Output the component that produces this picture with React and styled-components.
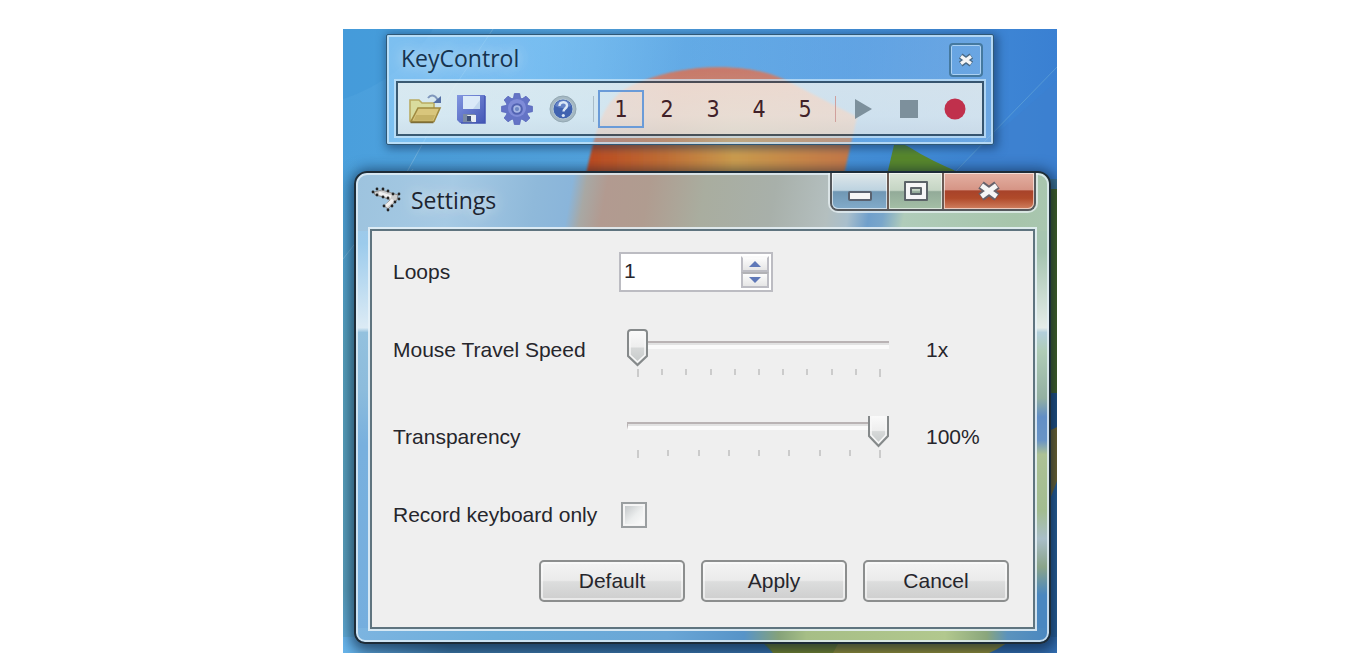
import React, { useState } from "react";
import styled, { createGlobalStyle } from "styled-components";

const GlobalStyle = createGlobalStyle`
  *, *::before, *::after { box-sizing: border-box; }
  body { margin: 0; background: #fff; }
  button, input { font: inherit; color: inherit; margin: 0; }
`;

const captionFont = `"Open Sans", "Noto Sans", sans-serif`;
const dialogFont = `"Liberation Sans", Arial, sans-serif`;

const Page = styled.main`
  display: flex;
  justify-content: center;
  padding: 29px 0 19px 39px;
`;

const Desktop = styled.div`
  position: relative;
  width: 100%;
  max-width: 714px;
  min-height: 624px;
  overflow: hidden;
  background: #4a9bd6;
`;

const WallpaperSvg = styled.svg`
  position: absolute;
  inset: 0;
  width: 100%;
  height: 100%;
`;

/* ---------- toolbar window ---------- */

const ToolWindow = styled.section`
  position: absolute;
  top: 5px;
  left: 43px;
  right: 63px;
  padding: 0 9px 8px;
  border: 1px solid #2f5876;
  border-radius: 2px;
  background: linear-gradient(100deg, rgba(160, 215, 255, 0.6), rgba(150, 210, 255, 0.55) 25%, rgba(145, 198, 246, 0.3) 48%, rgba(150, 198, 245, 0.34) 75%, rgba(155, 200, 240, 0.5));
  box-shadow: inset 0 0 0 2px rgba(205, 232, 250, 0.75), 2px 2px 10px 2px rgba(20, 50, 90, 0.55);
  font-family: ${captionFont};
`;

const ToolCaption = styled.header`
  display: flex;
  align-items: flex-start;
  justify-content: space-between;
  height: 44px;
  padding: 8px 1px 0 5px;
`;

const CaptionText = styled.h1`
  margin: 0;
  font-size: 23px;
  font-weight: 400;
  line-height: 30px;
  color: ${(p) => p.$tone || "#16334f"};
  text-shadow: 0 0 12px rgba(255, 255, 255, 0.5), 0 0 20px rgba(255, 255, 255, 0.5);
`;

const SmallClose = styled.button`
  display: grid;
  place-items: center;
  width: 34px;
  height: 34px;
  padding: 0;
  border: 2px solid #45799f;
  border-radius: 4px;
  background: transparent;
  box-shadow: inset 0 0 0 1px rgba(200, 228, 250, 0.7);
`;

const ToolStrip = styled.div`
  display: flex;
  align-items: center;
  height: 55px;
  padding-left: 4px;
  margin-top: 2px;
  border: 2px solid rgba(40, 62, 78, 0.78);
  background: linear-gradient(rgba(248, 247, 240, 0.74), rgba(244, 246, 242, 0.74) 65%, rgba(234, 236, 234, 0.74)) padding-box;
  box-shadow: 0 0 0 2px rgba(205, 232, 250, 0.7);
`;

const ToolButton = styled.button`
  display: grid;
  place-items: center;
  flex: 0 0 46px;
  height: 38px;
  padding: 0;
  border: 2px solid ${(p) => (p.$active ? "#6a9bd8" : "transparent")};
  background: none;
  font-family: "DejaVu Sans Condensed", "DejaVu Sans", sans-serif;
  font-size: 23px;
  line-height: 30px;
  color: #402028;
`;

const Divider = styled.span`
  flex: 0 0 12px;
  height: 26px;
  background: linear-gradient(${(p) => p.$line}, ${(p) => p.$line}) 7px 0 / 1px 100% no-repeat;
`;

/* ---------- settings window ---------- */

const SettingsWindow = styled.section`
  position: absolute;
  top: 142px;
  left: 11px;
  right: 6px;
  padding: 0 14px 13px;
  border: 2px solid #1d2c38;
  border-radius: 13px 13px 11px 11px;
  background:
    linear-gradient(100deg, #9dc3de, #a6cae4 14%, #8fb9da 26%, #8ab5da 31%, #a8a8a4 33%, #b29a90 36%, #b09c90 42%, #a9ad9f 50%, #a8b0aa 60%, #b4bfbf 68%, #a9bfcc 71%, #6f9fcb 74%, #79a6ca 76%, #b0ccba 79%, #a7c5ab 95%, #a9c6b0) 0 0 / 100% 58px no-repeat,
    linear-gradient(90deg, #7cb4e0, #6caedb 20%, #6aa6d6 45%, #5794c8 56%, #85a27a 61%, #a6be86 65%, #b2c88e 85%, #8aa67c 91%, #5b93bd 94%, #4a87c0) 0 100% / 100% 14px no-repeat,
    linear-gradient(#9fc5e0, #9ccbec 15%, #dcebf5 33%, #93c1de 34%, #8dbcdc 46%, #78b0de 58%, #75aede) 0 0 / 50% 100% no-repeat,
    linear-gradient(#a9c6b0, #a5c4b0 17%, #e4ece8 33%, #b2cfdb 34%, #afccb6 38%, #93b0a2 48%, #628fc6 52%, #6994c6 57%, #acc195 60%, #a2bc90 72%, #a9bec8 78%, #8aa48a 84%, #4a87c0 90%, #4a87c0) 100% 0 / 50% 100% no-repeat;
  box-shadow: inset 0 0 0 2px rgba(228, 240, 248, 0.8), 1px 3px 14px 4px rgba(8, 28, 54, 0.65);
  font-family: ${dialogFont};
`;

const TitleBar = styled.header`
  display: flex;
  align-items: flex-start;
  height: 56px;
`;

const TitleLabel = styled.div`
  display: flex;
  flex: 1;
  align-items: center;
  gap: 10px;
  padding: 12px 0 0 1px;
  font-family: ${captionFont};
`;

const WindowControls = styled.div`
  display: flex;
  height: 38px;
  margin-right: -1px;
  border: 2px solid #55585c;
  border-top: 0;
  border-radius: 0 0 8px 8px;
  box-shadow: 0 0 0 2px rgba(235, 243, 246, 0.7);
  clip-path: inset(0 -2px -2px);
`;

const controlFill = {
  min: "linear-gradient(#dfe7ea, #bdd3e0 48%, #7097b4 52%, #82abca)",
  max: "linear-gradient(#dce6d8, #c5d5c4 48%, #93ab99 52%, #a4bfa6)",
  close: "linear-gradient(#e3b0a2, #d69586 46%, #a8432a 50%, #b04a2a 70%, #d08060)",
};

const controlRadius = { min: "0 0 0 6px", max: "0", close: "0 0 6px 0" };

const ControlButton = styled.button`
  display: grid;
  place-items: center;
  width: ${(p) => (p.$kind === "close" ? 92 : 55)}px;
  padding: 0;
  border: 0;
  border-left: ${(p) => (p.$kind === "min" ? "0" : "2px solid #6b5b54")};
  border-radius: ${(p) => controlRadius[p.$kind]};
  background: ${(p) => controlFill[p.$kind]};
  box-shadow: inset 0 0 0 1px rgba(255, 255, 255, 0.6);
`;

const Client = styled.form`
  padding: 2px 0 25px 21px;
  border: 2px solid #5f747f;
  background: #efefef;
  box-shadow: 0 0 0 2px rgba(232, 242, 248, 0.85);
  font-size: 21px;
  line-height: 30px;
  color: #26262c;
`;

const Row = styled.div`
  display: grid;
  grid-template-columns: 226px minmax(0, 1fr) 107px;
  align-items: center;
  height: ${(p) => p.$height}px;
`;

const Label = styled.label`
  white-space: nowrap;
`;

const Spinner = styled.div`
  display: flex;
  width: 154px;
  height: 40px;
  padding: 2px;
  border: 2px solid #bcbcc2;
  background: #fff;
`;

const SpinInput = styled.input`
  flex: 1;
  min-width: 0;
  height: 30px;
  padding: 0 0 0 1px;
  border: 0;
  outline: 0;
  background: transparent;
`;

const SpinButtons = styled.div`
  display: grid;
  grid-template-rows: 1fr 1fr;
  width: 28px;
`;

const SpinButton = styled.button`
  display: grid;
  place-items: center;
  padding: 0;
  border: 2px solid #bdbdc4;
  border-top-color: ${(p) => (p.$up ? "#fafafa" : "#b2b2b6")};
  background: linear-gradient(#fcfcfc, #e6e6e6);
`;

const SliderBox = styled.div`
  position: relative;
  height: ${(p) => (p.$clipped ? 42 : 48)}px;
  margin: ${(p) => (p.$clipped ? "0 37px 0 8px" : "6px 37px 0 8px")};
  padding-top: ${(p) => (p.$clipped ? 6 : 12)}px;
`;

const Track = styled.div`
  height: 8px;
  border: solid #b9b3b4;
  border-width: 2px 0 0 ${(p) => (p.$clipped ? 1 : 0)}px;
  border-bottom: 4px solid #fafafa;
  background: #e2e2e2;
`;

const Ticks = styled.div`
  display: flex;
  justify-content: space-between;
  height: 8px;
  margin-top: 20px;
  padding: 0 8px 0 10px;
`;

const Tick = styled.i`
  width: 2px;
  height: 6px;
  background: #cbcbcb;
  &:first-child, &:last-child { height: 8px; }
`;

const Thumb = styled.svg`
  position: absolute;
  top: 0;
  pointer-events: none;
`;

const Range = styled.input`
  position: absolute;
  top: 0;
  left: 0;
  width: 100%;
  height: 38px;
  appearance: none;
  background: transparent;
  outline: 0;
  &::-webkit-slider-thumb { appearance: none; width: 22px; height: 38px; background: transparent; }
`;

const Check = styled.input`
  appearance: none;
  display: block;
  width: 26px;
  height: 26px;
  margin-left: 2px;
  border: 2px solid #9a9ea0;
  background: linear-gradient(135deg, #c4c8ca, #eceeee 55%, #fafafa) content-box, #f6f6f6;
  padding: 2px;
  box-shadow: inset 0 0 0 1px #f4f4f4;
  &:checked { background: #5a78b8 content-box; }
`;

const Actions = styled.div`
  display: flex;
  justify-content: flex-end;
  gap: 16px;
  padding: 15px 24px 0 0;
`;

const PushButton = styled.button`
  width: 146px;
  height: 42px;
  padding: 0;
  border: 2px solid #8c8e8e;
  border-radius: 5px;
  background: linear-gradient(#f3f3f3, #ebebeb 48%, #dcdddd 52%, #cecece);
  box-shadow: inset 0 0 0 2px rgba(252, 252, 252, 0.6);
`;

/* ---------- drawings ---------- */

function Wallpaper() {
  return (
    <WallpaperSvg viewBox="0 0 714 624" preserveAspectRatio="none" aria-hidden="true">
      <defs>
        <linearGradient id="sky" x1="0" y1="0" x2="1" y2="0">
          <stop offset="0" stopColor="#4a9fdc" />
          <stop offset="0.35" stopColor="#54a5e0" />
          <stop offset="0.75" stopColor="#4490da" />
          <stop offset="1" stopColor="#3a80d2" />
        </linearGradient>
        <linearGradient id="deep" x1="0" y1="0" x2="0" y2="1">
          <stop offset="0.2" stopColor="#5aa9c8" stopOpacity="0" />
          <stop offset="0.5" stopColor="#5aa4bd" stopOpacity="0.9" />
          <stop offset="0.9" stopColor="#5a9fbc" />
          <stop offset="1" stopColor="#63b0e0" />
        </linearGradient>
        <linearGradient id="red" x1="0" y1="0" x2="1" y2="0">
          <stop offset="0" stopColor="#c04a20" />
          <stop offset="0.3" stopColor="#c67236" />
          <stop offset="0.55" stopColor="#d0a050" />
          <stop offset="0.85" stopColor="#cc8448" />
          <stop offset="1" stopColor="#c87848" />
        </linearGradient>
        <linearGradient id="redTop" x1="0" y1="0" x2="0" y2="1">
          <stop offset="0" stopColor="#e0562c" />
          <stop offset="0.6" stopColor="#e46c3c" stopOpacity="0.7" />
          <stop offset="1" stopColor="#d08040" stopOpacity="0" />
        </linearGradient>
        <linearGradient id="base" x1="0" y1="0" x2="1" y2="0">
          <stop offset="0" stopColor="#69b6ec" />
          <stop offset="0.15" stopColor="#427fae" />
          <stop offset="1" stopColor="#3470b4" />
        </linearGradient>
        <filter id="soften" x="-5%" y="-5%" width="110%" height="110%">
          <feGaussianBlur stdDeviation="1" />
        </filter>
      </defs>
      <rect width="714" height="624" fill="url(#sky)" />
      <rect width="14" height="624" fill="url(#deep)" />
      <path d="M0 0H90Q60 50 0 70Z" fill="#3f97d8" opacity="0.5" />
      <path d="M60 150L110 60L150 0M0 230L70 140" stroke="#a8d4ec" strokeWidth="1" opacity="0.4" fill="none" />
      <g filter="url(#soften)">
        <path d="M242 150C255 90 262 64 300 52C345 34 405 34 440 50L514 88L500 150Z" fill="url(#red)" />
        <path d="M250 118C258 80 268 64 300 52C345 34 405 34 440 50L514 88L506 120Z" fill="url(#redTop)" />
      </g>
      <path d="M543 150L551 116Q556 112 566 118Q588 132 620 145L714 175V380L690 420V150Z" fill="#5a8a2c" />
      <path d="M700 150H714V365H700Z" fill="#4c6b20" />
      <path d="M606 146L714 52V160H640Z" fill="#3d80ce" opacity="0.7" />
      <path d="M612 143L714 38" stroke="#7dbcd8" strokeWidth="1" opacity="0.4" />
      <path d="M704 364H714V400L704 405Z" fill="#24588e" />
      <path d="M700 405L714 398V455L704 480Z" fill="#80702c" />
      <path d="M704 478L714 452V624H704Z" fill="#2d69a6" />
      <rect y="608" width="714" height="16" fill="url(#base)" />
      <path d="M412 606H674Q660 618 646 624H430Q425 614 412 606Z" fill="#9a9434" />
      <path d="M412 606H500L490 624H430Z" fill="#6c8428" opacity="0.7" />
    </WallpaperSvg>
  );
}

function OpenIcon() {
  return (
    <svg width="34" height="32" viewBox="0 0 34 32" aria-hidden="true">
      <path d="M2 7h9l3 3h12v7H12L3 28H2Z" fill="#d9dc9e" stroke="#b9ab62" strokeWidth="1.600" />
      <path d="M3 28.500L10 15h22l-6 13.500Z" fill="#d9c67c" stroke="#a08a40" strokeWidth="1.600" />
      <path d="M6 27h19l2-5H8Z" fill="#c6b266" />
      <path d="M2.500 29.500h23" stroke="#7d6d38" strokeWidth="1.500" />
      <path d="M20 5c3-4 8-3 10 3" fill="none" stroke="#7f97bc" strokeWidth="2" />
      <path d="M33 3v7h-8Z" fill="#5671a6" />
    </svg>
  );
}

function SaveIcon() {
  return (
    <svg width="30" height="30" viewBox="0 0 30 30" aria-hidden="true">
      <defs>
        <linearGradient id="disk" x1="0" y1="0" x2="1" y2="1">
          <stop offset="0" stopColor="#8296e0" />
          <stop offset="1" stopColor="#4457b6" />
        </linearGradient>
      </defs>
      <path d="M1 1h28v28H4l-3-3Z" fill="url(#disk)" />
      <path d="M7 2h17v13H7Z" fill="#dbeaf8" />
      <path d="M17 15l7-9v9Z" fill="#c3d8ee" />
      <path d="M7 20h12v9H7Z" fill="#7a8aa4" />
      <path d="M11 21h9v7h-4Z" fill="#e8edf4" />
      <path d="M11 22h4v5h-4Z" fill="#3d4e78" />
      <path d="M29 2v27H5" fill="none" stroke="#4355b4" strokeWidth="1.500" />
    </svg>
  );
}

function GearIcon() {
  const teeth = [0, 45, 90, 135, 180, 225, 270, 315];
  return (
    <svg width="34" height="34" viewBox="0 0 32 32" aria-hidden="true">
      <g fill="#6474c6">
        {teeth.map((a) => (
          <path key={a} d="M12.500 7L13.500 1.500h5L19.500 7Z" stroke="#5868bc" strokeWidth="0.800" transform={`rotate(${a} 16 16)`} />
        ))}
        <circle cx="16" cy="16" r="11" />
      </g>
      <circle cx="16" cy="15" r="8.500" fill="#7f8cd8" />
      <circle cx="16" cy="16" r="4.500" fill="#a9b9e6" stroke="#5263b2" strokeWidth="2" />
      <circle cx="16" cy="16" r="2" fill="#6d88c4" />
    </svg>
  );
}

function HelpIcon() {
  return (
    <svg width="30" height="30" viewBox="0 0 30 30" aria-hidden="true">
      <circle cx="15" cy="15" r="13" fill="#a5b8c2" stroke="#93a8b3" strokeWidth="1" />
      <circle cx="15" cy="15" r="10" fill="#4063b0" stroke="#b3c7d6" strokeWidth="1" />
      <path d="M7 12a8.500 8.500 0 0 1 16 0Q15 16 7 12Z" fill="#6583c6" />
      <path d="M11.500 12c0-5 7.500-5 7.500-.5c0 3-3.500 3-3.500 6" fill="none" stroke="#dbe7f6" strokeWidth="2.400" />
      <circle cx="15.300" cy="21.500" r="1.600" fill="#dbe7f6" />
    </svg>
  );
}

function KeyboardIcon() {
  return (
    <svg width="30" height="26" viewBox="0 0 30 26" aria-hidden="true">
      <path d="M3 5L11 3L27 8L26 13L17 22L13 19L19 13L12 10L4 8Z" fill="#cdcdcd" stroke="#8e8e8e" strokeWidth="1" />
      <path d="M8 6l12 4M15 19l7-6" stroke="#f0f0f0" strokeWidth="3" />
      <g fill="#242424">
        {[[2, 5], [6, 2], [12, 2], [17, 4], [22, 7], [28, 7], [6, 8], [12, 10], [17, 11], [28, 12], [24, 15], [21, 19], [17, 23], [13, 19]].map(([x, y]) => (
          <circle key={`${x}-${y}`} cx={x} cy={y} r="1.400" />
        ))}
      </g>
    </svg>
  );
}

function CrossIcon({ width, height, outline }) {
  return (
    <svg width={width} height={height} viewBox="0 0 24 20" aria-hidden="true">
      <path d="M4 4L20 16M20 4L4 16" stroke={outline} strokeWidth="9" />
      <path d="M4.500 4.500L19.500 15.500M19.500 4.500L4.500 15.500" stroke="#f5f5f5" strokeWidth="5" />
    </svg>
  );
}

function SliderThumb({ clipped, ratio }) {
  const body = clipped ? "M1 0V20L10.500 30L20 20V0" : "M1 4Q1 1 4 1H17Q20 1 20 4V27L10.500 36L1 27Z";
  const id = clipped ? "thumbClipped" : "thumbFull";
  return (
    <Thumb width="21" height="38" viewBox="0 0 21 38" style={{ left: `calc((100% - 21px) * ${ratio})` }} aria-hidden="true">
      <defs>
        <linearGradient id={id} x1="0" y1="0" x2="0" y2="1">
          <stop offset="0" stopColor="#fafafa" />
          <stop offset="0.480" stopColor="#eeeeee" />
          <stop offset="0.520" stopColor="#d6d8d8" />
          <stop offset="1" stopColor="#c4c8c8" />
        </linearGradient>
      </defs>
      <path d={body} fill={`url(#${id})`} stroke="#85898a" strokeWidth="2" />
      <path d={clipped ? "M3 0V19L10.500 27L18 19V0" : "M3 4V26L10.500 33L18 26V4Z"} fill="none" stroke="#f8f8f8" strokeWidth="1.500" />
    </Thumb>
  );
}

function Slider({ id, min, max, value, onChange, ticks, clipped }) {
  return (
    <SliderBox $clipped={clipped}>
      <Track $clipped={clipped} />
      <Ticks>
        {Array.from({ length: ticks }, (_, i) => (
          <Tick key={i} />
        ))}
      </Ticks>
      <SliderThumb clipped={clipped} ratio={(value - min) / (max - min)} />
      <Range id={id} type="range" min={min} max={max} value={value} onChange={(e) => onChange(Number(e.target.value))} />
    </SliderBox>
  );
}

export default function App() {
  const [slot, setSlot] = useState(1);
  const [loops, setLoops] = useState(1);
  const [speed, setSpeed] = useState(1);
  const [opacity, setOpacity] = useState(100);

  return (
    <Page>
      <GlobalStyle />
      <Desktop>
        <Wallpaper />

        <ToolWindow>
          <ToolCaption>
            <CaptionText>KeyControl</CaptionText>
            <SmallClose type="button" aria-label="Close">
              <CrossIcon width={16} height={14} outline="#4a6a86" />
            </SmallClose>
          </ToolCaption>
          <ToolStrip>
            <ToolButton aria-label="Open"><OpenIcon /></ToolButton>
            <ToolButton aria-label="Save"><SaveIcon /></ToolButton>
            <ToolButton aria-label="Settings"><GearIcon /></ToolButton>
            <ToolButton aria-label="Help"><HelpIcon /></ToolButton>
            <Divider $line="#a9bcc8" />
            {[1, 2, 3, 4, 5].map((n) => (
              <ToolButton key={n} $active={slot === n} onClick={() => setSlot(n)}>{n}</ToolButton>
            ))}
            <Divider $line="#d0a09c" />
            <ToolButton aria-label="Play">
              <svg width="20" height="20" viewBox="0 0 20 20"><path d="M2 0L19 10L2 20Z" fill="#7d909c" /></svg>
            </ToolButton>
            <ToolButton aria-label="Stop">
              <svg width="20" height="20" viewBox="0 0 20 20"><path d="M1 1H19V19H1Z" fill="#7d909c" /></svg>
            </ToolButton>
            <ToolButton aria-label="Record">
              <svg width="22" height="22" viewBox="0 0 22 22"><circle cx="11" cy="11" r="10.500" fill="#c0304c" /></svg>
            </ToolButton>
          </ToolStrip>
        </ToolWindow>

        <SettingsWindow>
          <TitleBar>
            <TitleLabel>
              <KeyboardIcon />
              <CaptionText as="h2" $tone="#1c2430">Settings</CaptionText>
            </TitleLabel>
            <WindowControls>
              <ControlButton $kind="min" aria-label="Minimize">
                <svg width="24" height="30" viewBox="0 0 24 30"><rect x="1" y="16" width="22" height="8" rx="1" fill="#f6f6f6" stroke="#5a6270" strokeWidth="2" /></svg>
              </ControlButton>
              <ControlButton $kind="max" aria-label="Maximize">
                <svg width="24" height="20" viewBox="0 0 24 20"><path d="M1 1H23V19H1ZM7 7V13H17V7Z" fill="#f6f6f6" fillRule="evenodd" stroke="#5c6468" strokeWidth="2" strokeLinejoin="round" /></svg>
              </ControlButton>
              <ControlButton $kind="close" aria-label="Close">
                <CrossIcon width={24} height={20} outline="#66616a" />
              </ControlButton>
            </WindowControls>
          </TitleBar>

          <Client onSubmit={(e) => e.preventDefault()}>
            <Row $height={78}>
              <Label htmlFor="loops">Loops</Label>
              <Spinner>
                <SpinInput id="loops" type="text" inputMode="numeric" value={loops} onChange={(e) => setLoops(Number(e.target.value) || 0)} />
                <SpinButtons>
                  <SpinButton $up type="button" aria-label="More loops" onClick={() => setLoops(loops + 1)}>
                    <svg width="12" height="6" viewBox="0 0 12 6"><path d="M0 6L6 0L12 6Z" fill="#5f78b8" /></svg>
                  </SpinButton>
                  <SpinButton type="button" aria-label="Fewer loops" onClick={() => setLoops(Math.max(0, loops - 1))}>
                    <svg width="12" height="6" viewBox="0 0 12 6"><path d="M0 0L6 6L12 0Z" fill="#5f78b8" /></svg>
                  </SpinButton>
                </SpinButtons>
              </Spinner>
            </Row>
            <Row $height={78}>
              <Label htmlFor="speed">Mouse Travel Speed</Label>
              <Slider id="speed" min={1} max={11} value={speed} onChange={setSpeed} ticks={11} />
              <output htmlFor="speed">{speed}x</output>
            </Row>
            <Row $height={96}>
              <Label htmlFor="transparency">Transparency</Label>
              <Slider id="transparency" min={20} max={100} value={opacity} onChange={setOpacity} ticks={9} clipped />
              <output htmlFor="transparency">{opacity}%</output>
            </Row>
            <Row $height={60}>
              <Label htmlFor="keyboard-only">Record keyboard only</Label>
              <Check id="keyboard-only" type="checkbox" />
            </Row>
            <Actions>
              <PushButton type="button">Default</PushButton>
              <PushButton type="submit">Apply</PushButton>
              <PushButton type="button">Cancel</PushButton>
            </Actions>
          </Client>
        </SettingsWindow>
      </Desktop>
    </Page>
  );
}
